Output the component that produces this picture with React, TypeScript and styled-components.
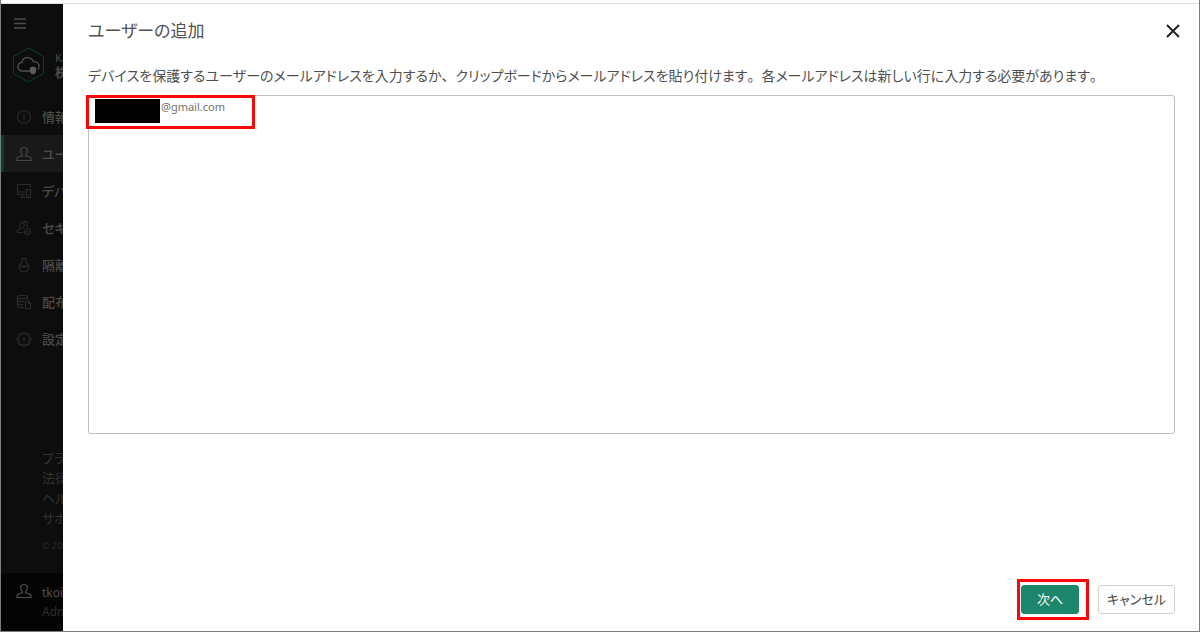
import React, { useState } from "react";
import styled, { createGlobalStyle } from "styled-components";

const GlobalStyle = createGlobalStyle`
  * { box-sizing: border-box; }
  body {
    margin: 0;
    background: #fff;
    color: #444;
    font-family: "Noto Sans", "Noto Sans CJK JP", sans-serif;
    font-size: 14px;
  }
  button, textarea { font-family: inherit; }
`;

const Window = styled.div`
  display: flex;
  flex-direction: column;
  min-height: 100vh;
  border: 1px solid #7d7d7d;
  border-top: 0;
`;

const TopStrip = styled.div`
  height: 4px;
  background: #fff;
  border-bottom: 1px solid #dfe2e3;
`;

const Body = styled.div`
  flex: 1;
  display: flex;
`;

const Sidebar = styled.aside`
  flex: none;
  width: 62px;
  display: flex;
  flex-direction: column;
  overflow: hidden;
  white-space: nowrap;
  background: #0d0d0d;
  color: #4c4c4c;
`;

const MenuButton = styled.button`
  display: flex;
  width: 18px;
  height: 20px;
  margin: 10px 0 0 10px;
  padding: 0;
  align-items: center;
  justify-content: center;
  border: 0;
  background: none;
  color: #4c4c4c;
`;

const Brand = styled.div`
  display: flex;
  align-items: center;
  gap: 10px;
  height: 36px;
  margin: 13px 0 15px 11px;
  font-size: 13px;
  line-height: 15px;

  strong { display: block; }
  small { display: block; font-size: 11px; }
`;

const BrandMark = styled.svg`
  flex: none;
  width: 33px;
  height: 36px;
`;

const NavLink = styled.a<{ $active?: boolean }>`
  display: flex;
  align-items: center;
  gap: 10px;
  height: 37px;
  padding-left: 12px;
  border-left: 3px solid ${(p) => (p.$active ? "#0c3d31" : "transparent")};
  background: ${(p) => (p.$active ? "#191919" : "transparent")};
  color: #4a4a4a;
  font-size: 13px;
  font-weight: 500;
  font-feature-settings: "palt";
  text-decoration: none;
`;

const Icon = styled.svg`
  flex: none;
  width: 16px;
  height: 16px;
  fill: none;
  stroke: currentColor;
  stroke-width: 1.2;
`;

const NavIcon = styled(Icon)<{ $bright?: boolean }>`
  color: ${(p) => (p.$bright ? "#484848" : "#2a2a2a")};
`;

const FooterLinks = styled.div`
  display: flex;
  flex-direction: column;
  margin-top: auto;
  padding: 0 0 19px 41px;
`;

const FooterLink = styled.a`
  color: #333;
  font-size: 13px;
  line-height: 20px;
  font-feature-settings: "palt";
  text-decoration: none;
`;

const Copyright = styled.div`
  margin-top: 10px;
  color: #2b2b2b;
  font-size: 9px;
  line-height: 16px;
`;

const Account = styled.div`
  display: flex;
  gap: 10px;
  height: 58px;
  padding: 10px 0 0 15px;
  background: #040404;
  color: #505050;
  font-size: 12px;
  line-height: 19px;

  small { display: block; color: #2f2f2f; font-size: 12px; }
`;

const Dialog = styled.form`
  flex: 1;
  min-width: 0;
  display: flex;
  flex-direction: column;
  padding: 12px 24px 12px 25px;
  background: #fff;
`;

const Header = styled.header`
  display: flex;
  align-items: center;
  justify-content: space-between;
  height: 30px;
`;

const Title = styled.h1`
  margin: 0;
  color: #505050;
  font-size: 17px;
  font-weight: 400;
  line-height: 30px;
  font-feature-settings: "palt";
`;

const CloseButton = styled.button`
  display: flex;
  padding: 0;
  margin-right: -5px;
  border: 0;
  background: none;
  color: #222;
`;

const Description = styled.label`
  margin-top: 20px;
  color: #505050;
  font-size: 14px;
  line-height: 20px;
  font-feature-settings: "palt";
  font-kerning: none;
`;

const Mark = styled.span`
  font-feature-settings: normal;
`;

const EntryArea = styled.div`
  position: relative;
  display: flex;
  margin-top: 9px;
`;

const Emails = styled.textarea`
  flex: 1;
  height: 339px;
  padding: 2px 8px;
  border: 1px solid #bfbfbf;
  border-radius: 3px;
  outline: 0;
  resize: none;
  color: #707070;
  background: #fff;
  font-size: 11px;
  line-height: 18px;
  text-indent: 64px;
`;

const Highlight = styled.div`
  position: absolute;
  border: 3px solid #fa0808;
  pointer-events: none;
`;

const EmailHighlight = styled(Highlight)`
  top: 0;
  left: -2px;
  width: 169px;
  height: 34px;
`;

const Redaction = styled.div`
  width: 65px;
  height: 24px;
  margin: 1px 0 0 6px;
  background: #000;
`;

const Actions = styled.footer`
  display: flex;
  justify-content: flex-end;
  gap: 19px;
  margin-top: auto;
  padding-bottom: 5px;
`;

const NextSlot = styled.div`
  position: relative;
  display: flex;
`;

const NextHighlight = styled(Highlight)`
  inset: -6px -10px -6px -4px;
`;

const Button = styled.button<{ $primary?: boolean }>`
  height: 29px;
  min-width: ${(p) => (p.$primary ? 58 : 77)}px;
  padding: 0 8px 2px;
  border: 1px solid ${(p) => (p.$primary ? "#1d866c" : "#d2d2d2")};
  border-radius: 3px;
  background: ${(p) => (p.$primary ? "#1d866c" : "#fff")};
  color: ${(p) => (p.$primary ? "#fff" : "#444")};
  font-size: 13px;
  line-height: 20px;
  font-feature-settings: "palt";
`;

const person = (
  <path d="M8 1.500c-2.200 0-3.300 1.600-3.300 3.500 0 1.600.7 2.800 1.700 3.500v1.200L2.600 11c-1 .4-1.600 1.200-1.600 2.200v1.300h14v-1.300c0-1-.6-1.800-1.600-2.200L9.600 9.700V8.500c1-.7 1.700-1.900 1.700-3.500C11.300 3.100 10.200 1.500 8 1.500z" />
);

const navItems = [
  {
    label: "情報パネル",
    icon: (
      <>
        <circle cx="8" cy="8" r="6.500" />
        <path d="M8 7v4.500M8 4.300v1.200" />
      </>
    ),
  },
  { label: "ユーザー", active: true, icon: person },
  {
    label: "デバイス",
    icon: (
      <>
        <path d="M9 11.500H1.500v-10h13V5M1.500 9H9M4 14.500h5M6.500 11.500v3" />
        <rect x="10.500" y="6.500" width="4" height="8" />
        <path d="M12 12.500h1" />
      </>
    ),
  },
  {
    label: "セキュリティ管理",
    icon: (
      <>
        <path d="M6 2.500a2.400 2.400 0 0 0-2.400 2.600c0 1.300.5 2.200 1.200 2.800v.8L2 10c-.7.4-1 .9-1 1.600v.9h6M6 2.500c1.400 0 2.300 1.100 2.300 2.600 0 1.300-.5 2.200-1.200 2.800v.8M7.500 1.900c1.200-.9 3.900-.5 3.900 2.400 0 1.200-.4 2.100-1 2.700" />
        <circle cx="11.500" cy="11.500" r="3" />
        <circle cx="11.500" cy="11.500" r=".6" />
      </>
    ),
  },
  {
    label: "隔離",
    icon: (
      <>
        <path d="M5 1.500h6M6.300 1.500v3.800a4.900 4.900 0 1 0 3.400 0V1.500" />
        <path d="M8 10v1.800M8 10 6 8.600M8 10l2-1.400M4.500 8.200l1.500.4v1.600M11.500 8.200l-1.500.4v1.600" />
      </>
    ),
  },
  {
    label: "配布パッケージ",
    icon: (
      <>
        <ellipse cx="6.500" cy="3" rx="5" ry="1.700" />
        <path d="M1.500 3v9c0 1 2.200 1.700 5 1.700h1M11.500 3v3M1.500 6c0 1 2.200 1.700 5 1.700h1.500M1.500 9c0 1 2.200 1.700 5 1.700h1" />
        <path d="M9.500 7.500h3l2 2v5h-5zM12.500 7.500v2h2" />
      </>
    ),
  },
  {
    label: "設定",
    icon: (
      <>
        <path d="M6.900 1.500h2.200l.4 1.600 1.200.5 1.400-.9 1.500 1.500-.9 1.400.5 1.200 1.600.4v2.200l-1.600.4-.5 1.200.9 1.400-1.500 1.500-1.400-.9-1.200.5-.4 1.600H6.900l-.4-1.600-1.200-.5-1.400.9-1.500-1.500.9-1.400-.5-1.200-1.600-.4V7.200l1.600-.4.5-1.200-.9-1.400 1.500-1.500 1.400.9 1.200-.5z" />
        <circle cx="8" cy="8.300" r="1" />
      </>
    ),
  },
];

const footerItems = ["プライバシー", "法律情報", "ヘルプ", "サポート"];

export default function App() {
  const [emails, setEmails] = useState("@gmail.com");

  return (
    <>
      <GlobalStyle />
      <Window>
        <TopStrip />
        <Body>
          <Sidebar>
            <MenuButton type="button" aria-label="メニュー">
              <svg width="12" height="12" stroke="currentColor" strokeWidth="1.500">
                <path d="M0 1h12M0 5.500h12M0 10h12" />
              </svg>
            </MenuButton>
            <Brand>
              <BrandMark viewBox="0 0 33 36" fill="none">
                <path d="M16.500 1 31.500 9.500v17L16.500 35 1.500 26.500v-17z" stroke="#0c3d33" />
                <path
                  d="M18.500 24H11c-3 0-5-1.700-5-4.300 0-2.300 1.600-4 3.800-4.200.6-3 2.900-4.800 5.700-4.800 2.700 0 4.800 1.500 5.700 3.900 3.600-.1 5.900 1.700 5.900 4.400 0 1.500-.6 2.700-1.600 3.500"
                  stroke="#505050"
                  strokeWidth="1.300"
                />
                <path d="M18 20.500 21 19.500l3 1v3.500c0 1.800-1.200 2.800-3 3.500-1.800-.7-3-1.700-3-3.500z" fill="#5c5c5c" />
              </BrandMark>
              <div>
                <small>Kaspersky</small>
                <strong>株式会社</strong>
              </div>
            </Brand>
            <nav>
              {navItems.map((item) => (
                <NavLink key={item.label} href="#" $active={item.active}>
                  <NavIcon viewBox="0 0 16 16" $bright={item.active}>
                    {item.icon}
                  </NavIcon>
                  {item.label}
                </NavLink>
              ))}
            </nav>
            <FooterLinks>
              {footerItems.map((label) => (
                <FooterLink key={label} href="#">
                  {label}
                </FooterLink>
              ))}
              <Copyright>© 2021</Copyright>
            </FooterLinks>
            <Account>
              <Icon viewBox="0 0 16 16">{person}</Icon>
              <div>
                tkoike
                <small>Administrator</small>
              </div>
            </Account>
          </Sidebar>
          <Dialog onSubmit={(e: React.FormEvent) => e.preventDefault()}>
            <Header>
              <Title>ユーザーの追加</Title>
              <CloseButton type="button" aria-label="閉じる">
                <svg width="14" height="14" stroke="currentColor" strokeWidth="2">
                  <path d="M1 1l12 12M13 1L1 13" />
                </svg>
              </CloseButton>
            </Header>
            <Description htmlFor="emails">
              デバイスを保護するユーザーのメールアドレスを入力するか<Mark>、</Mark>
              クリップボードからメールアドレスを貼り付けます<Mark>。</Mark>
              各メールアドレスは新しい行に入力する必要があります<Mark>。</Mark>
            </Description>
            <EntryArea>
              <Emails
                id="emails"
                spellCheck={false}
                value={emails}
                onChange={(e) => setEmails(e.target.value)}
              />
              <EmailHighlight>
                <Redaction />
              </EmailHighlight>
            </EntryArea>
            <Actions>
              <NextSlot>
                <Button type="submit" $primary>
                  次へ
                </Button>
                <NextHighlight />
              </NextSlot>
              <Button type="button">キャンセル</Button>
            </Actions>
          </Dialog>
        </Body>
      </Window>
    </>
  );
}
